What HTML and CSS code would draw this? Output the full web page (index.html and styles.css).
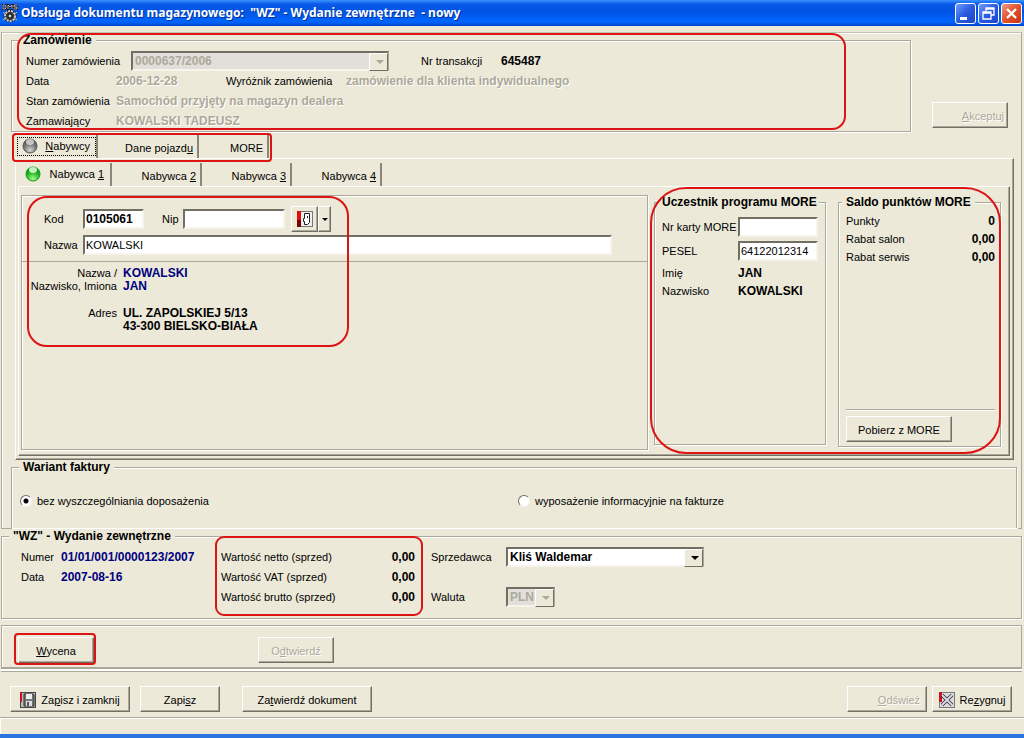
FILE: index.html
```html
<!DOCTYPE html>
<html lang="pl">

<head>
    <meta charset="UTF-8">
    <meta name="viewport" content="width=device-width, initial-scale=1.0">
    <title>Obsługa dokumentu magazynowego</title>
    <link rel="stylesheet" href="styles.css">
</head>

<body>
    <header class="titlebar">
        <svg class="app-icon" width="16" height="18" viewBox="0 0 16 18">
            <path d="M1 1v4h2l1-1V2L3 1zM6 6V1l2 2 2-2v5M15 1h-3v2h3v2h-3" fill="none" stroke="#112" stroke-width="2" />
            <path d="M1 1v4h2l1-1V2L3 1zM6 5V1l2 2 2-2v4M15 1h-3v2h3v2h-3" fill="none" stroke="#ddd" stroke-width="0.8" />
            <circle cx="8" cy="12" r="5" fill="#333" stroke="#222" stroke-width="3" />
            <circle cx="8" cy="12" r="5" fill="#333" stroke="#ccc" stroke-width="2" stroke-dasharray="2 1" />
            <circle cx="8" cy="12" r="2" fill="#ddd" stroke="#111" />
            <path d="M1 8l3 3M15 8l-3 3M1 16l3-2M15 16l-3-2" stroke="#bbb" />
        </svg>
        <h1>Obsługa dokumentu magazynowego: &nbsp;"WZ" - Wydanie zewnętrzne &nbsp;- nowy</h1>
        <button class="win-btn" aria-label="Minimalizuj">
            <svg width="19" height="19" viewBox="0 0 19 19"><rect x="4" y="13" width="7" height="3" fill="#fff" /></svg>
        </button>
        <button class="win-btn" aria-label="Przywróć">
            <svg width="19" height="19" viewBox="0 0 19 19"><path d="M7 7V4h8v7h-3M7 5h8M4 8h8v7H4zM4 9h8" fill="none" stroke="#fff" stroke-width="1.3" /></svg>
        </button>
        <button class="win-btn close" aria-label="Zamknij">
            <svg width="19" height="19" viewBox="0 0 19 19"><path d="M5 5l9 9M14 5l-9 9" stroke="#fff" stroke-width="2.4" /></svg>
        </button>
    </header>

    <main class="panel">
        <div class="order-row">
            <fieldset class="group order">
                <legend>Zamówienie</legend>
                <div class="line">
                    <label class="order-label" for="orderNo">Numer zamówienia</label>
                    <span class="combo combo-order disabled">
                        <select id="orderNo" disabled><option>0000637/2006</option></select>
                    </span>
                    <span class="trans-label">Nr transakcji</span>
                    <b>645487</b>
                </div>
                <div class="line">
                    <span class="order-key">Data</span>
                    <b class="grey date">2006-12-28</b>
                    <span class="mark-label">Wyróżnik zamówienia</span>
                    <b class="grey">zamówienie dla klienta indywidualnego</b>
                </div>
                <div class="line">
                    <span class="order-key">Stan zamówienia</span>
                    <b class="grey">Samochód przyjęty na magazyn dealera</b>
                </div>
                <div class="line">
                    <span class="order-key">Zamawiający</span>
                    <b class="grey">KOWALSKI TADEUSZ</b>
                </div>
                <span class="callout callout-order"></span>
            </fieldset>
            <button class="btn btn-accept" disabled><span><u>A</u>kceptuj</span></button>
        </div>

        <div class="tabs tabs-main" role="tablist">
            <button class="tab tab-buyers active" role="tab">
                <svg width="18" height="18" viewBox="0 0 18 18">
                    <defs>
                        <radialGradient id="greyBall" cx="50%" cy="80%" r="75%">
                            <stop offset="0" stop-color="#d5d5d5" />
                            <stop offset="0.6" stop-color="#777" />
                            <stop offset="1" stop-color="#555" />
                        </radialGradient>
                    </defs>
                    <circle cx="9" cy="9" r="7" fill="url(#greyBall)" stroke="#555" />
                    <ellipse cx="9" cy="5" rx="4" ry="3" fill="#ddd" opacity="0.8" />
                </svg>
                <span><u>N</u>abywcy</span>
            </button>
            <button class="tab tab-car" role="tab"><span>Dane pojazd<u>u</u></span></button>
            <button class="tab tab-more" role="tab"><span>MORE</span></button>
            <span class="callout callout-tabs"></span>
        </div>

        <div class="page outer">
            <div class="tabs tabs-inner" role="tablist">
                <button class="tab tab-first active" role="tab">
                    <svg width="18" height="18" viewBox="0 0 18 18">
                        <defs>
                            <radialGradient id="greenBall" cx="50%" cy="85%" r="80%">
                                <stop offset="0" stop-color="#a6ff8c" />
                                <stop offset="0.6" stop-color="#22b522" />
                                <stop offset="1" stop-color="#078a12" />
                            </radialGradient>
                        </defs>
                        <circle cx="9" cy="9" r="7" fill="url(#greenBall)" stroke="#159a1c" />
                        <ellipse cx="9" cy="5" rx="4" ry="3" fill="#dfffd8" opacity="0.85" />
                    </svg>
                    <span>Nabywca <u>1</u></span>
                </button>
                <button class="tab tab-next" role="tab"><span>Nabywca <u>2</u></span></button>
                <button class="tab tab-next" role="tab"><span>Nabywca <u>3</u></span></button>
                <button class="tab tab-next" role="tab"><span>Nabywca <u>4</u></span></button>
            </div>

            <div class="page inner">
                <section class="buyer">
                    <div class="buyer-form">
                        <div class="line">
                            <label class="buyer-label" for="code">Kod</label>
                            <input class="field bold code" id="code" type="text" value="0105061">
                            <label class="nip-label" for="nip">Nip</label>
                            <input class="field nip" id="nip" type="text">
                            <button class="btn tool" aria-label="Kartoteka">
                                <svg width="16" height="16" viewBox="0 0 16 16">
                                    <rect x="0.5" y="0.5" width="15" height="15" fill="#eee" stroke="#777" />
                                    <rect x="0" y="0" width="4" height="9" fill="#e01010" />
                                    <rect x="0" y="9" width="4" height="7" fill="#700" />
                                    <path d="M7.500 2.500h5v9l-2 2h-3v-3h-1v-3h1z" fill="#fff" stroke="#222" />
                                    <path d="M10.500 5v2" stroke="#222" />
                                </svg>
                            </button>
                            <button class="btn tool-arrow" aria-label="Więcej"></button>
                        </div>
                        <div class="line name-line">
                            <label class="buyer-label" for="name">Nazwa</label>
                            <input class="field name" id="name" type="text" value="KOWALSKI">
                        </div>
                    </div>
                    <dl class="details">
                        <dt>Nazwa /</dt>
                        <dd class="navy">KOWALSKI</dd>
                        <dt>Nazwisko, Imiona</dt>
                        <dd class="navy">JAN</dd>
                        <dt class="address">Adres</dt>
                        <dd class="address">UL. ZAPOLSKIEJ 5/13<br>43-300 BIELSKO-BIAŁA</dd>
                    </dl>
                    <span class="callout callout-buyer"></span>
                </section>

                <div class="more">
                    <fieldset class="group member">
                        <legend>Uczestnik programu MORE</legend>
                        <div class="member-grid">
                            <label for="card">Nr karty MORE</label>
                            <input class="field" id="card" type="text">
                            <label for="pesel">PESEL</label>
                            <input class="field" id="pesel" type="text" value="64122012314">
                        </div>
                        <div class="member-grid member-names">
                            <span>Imię</span><b>JAN</b>
                            <span>Nazwisko</span><b>KOWALSKI</b>
                        </div>
                    </fieldset>
                    <fieldset class="group balance">
                        <legend>Saldo punktów MORE</legend>
                        <div class="sum"><span>Punkty</span><b>0</b></div>
                        <div class="sum"><span>Rabat salon</span><b>0,00</b></div>
                        <div class="sum"><span>Rabat serwis</span><b>0,00</b></div>
                        <div class="fetch">
                            <button class="btn">Pobierz z MORE</button>
                        </div>
                    </fieldset>
                    <span class="callout callout-more"></span>
                </div>
            </div>
        </div>

        <fieldset class="group variant">
            <legend>Wariant faktury</legend>
            <div class="radios">
                <label><input type="radio" name="variant" checked>bez wyszczególniania doposażenia</label>
                <label><input type="radio" name="variant">wyposażenie informacyjnie na fakturze</label>
            </div>
        </fieldset>
    </main>

    <fieldset class="group document">
        <legend>"WZ" - Wydanie zewnętrzne</legend>
        <div class="doc-cols">
            <div class="doc-number">
                <span>Numer</span><b class="navy">01/01/001/0000123/2007</b>
                <span>Data</span><b class="navy">2007-08-16</b>
            </div>
            <div class="doc-values">
                <div class="sum"><span>Wartość netto (sprzed)</span><b>0,00</b></div>
                <div class="sum"><span>Wartość VAT (sprzed)</span><b>0,00</b></div>
                <div class="sum"><span>Wartość brutto (sprzed)</span><b>0,00</b></div>
                <span class="callout callout-values"></span>
            </div>
            <div class="doc-seller">
                <label for="seller">Sprzedawca</label>
                <span class="combo combo-seller">
                    <select id="seller"><option>Kliś Waldemar</option></select>
                </span>
                <label for="currency">Waluta</label>
                <span class="combo combo-currency disabled">
                    <select id="currency" disabled><option>PLN</option></select>
                </span>
            </div>
        </div>
    </fieldset>

    <section class="actions">
        <div class="price">
            <button class="btn"><span><u>W</u>ycena</span></button>
            <span class="callout callout-price"></span>
        </div>
        <button class="btn btn-unlock" disabled><span>O<u>d</u>twierdź</span></button>
    </section>

    <footer class="footer">
        <button class="btn w120">
            <svg width="16" height="16" viewBox="0 0 16 16">
                <rect x="0.5" y="0.5" width="15" height="15" fill="#bbb" stroke="#444" />
                <rect x="0" y="0" width="2" height="10" fill="#d01020" />
                <path d="M4 2h9l1 1v11H4z" fill="#777" stroke="#333" />
                <rect x="6" y="2" width="6" height="5" fill="#eee" />
                <rect x="6" y="9" width="6" height="5" fill="#ddd" />
                <rect x="7" y="10" width="2" height="4" fill="#555" />
            </svg>
            <span>Za<u>p</u>isz i zamknij</span>
        </button>
        <button class="btn w80"><span>Zapi<u>s</u>z</span></button>
        <button class="btn w130"><span>Za<u>t</u>wierdź dokument</span></button>
        <button class="btn w80 btn-refresh" disabled><span><u>O</u>dśwież</span></button>
        <button class="btn w80 btn-cancel">
            <svg width="16" height="16" viewBox="0 0 16 16">
                <rect x="0.5" y="0.5" width="15" height="15" fill="#ddd" stroke="#777" />
                <rect x="0" y="0" width="3" height="10" fill="#d01020" />
                <path d="M3 3l10 10M13 3L3 13" stroke="#333" stroke-width="3.6" />
                <path d="M3 3l10 10M13 3L3 13" stroke="#dde" stroke-width="1.8" />
            </svg>
            <span>Re<u>z</u>ygnuj</span>
        </button>
    </footer>
    <div class="statusbar"></div>
</body>

</html>
```
FILE: styles.css
```css
* {
    box-sizing: border-box;
}

body {
    margin: 0;
    min-height: 100vh;
    display: flex;
    flex-direction: column;
    background-color: #ece9d8;
    color: black;
    font-family: 'Liberation Sans', Arial, sans-serif;
    font-size: 11px;
    line-height: 14px;
}

button,
input,
select {
    font: inherit;
    color: inherit;
    margin: 0;
}

/* bold captions and values */
b,
dd,
.bold,
.group legend,
.combo select {
    font-size: 12px;
    font-weight: bold;
}

/* title bar */
.titlebar {
    display: flex;
    align-items: center;
    height: 26px;
    padding: 0 2px;
    gap: 2px;
    background: linear-gradient(#3a93ff 0, #0a5ae8 4px, #0054e3 12px, #0066ff 22px, #0044c8 26px);
}

.titlebar h1 {
    flex: 1;
    margin: 0 0 0 1px;
    color: white;
    font-family: 'Noto Sans', sans-serif;
    font-size: 12px;
    font-weight: bold;
    line-height: 20px;
    text-shadow: 1px 1px 0 #00309c;
    white-space: nowrap;
}

.win-btn {
    width: 21px;
    height: 21px;
    padding: 0;
    border: 1px solid white;
    border-radius: 3px;
    background: linear-gradient(135deg, #6f9cff, #2a5ae0 50%, #1c48c8);
}

.win-btn.close {
    background: linear-gradient(135deg, #f09a80, #e0512c 50%, #c8340e);
}

.win-btn svg {
    display: block;
}

/* shared pieces */
.group {
    position: relative;
    min-width: 0;
    margin: 0;
    padding: 0;
    border: 1px solid #aca899;
    box-shadow: 1px 1px 0 white, inset 1px 1px 0 white;
}

.group legend {
    margin-left: 7px;
    padding: 0 4px;
    background-color: #ece9d8;
}

.line {
    display: flex;
    align-items: center;
    height: 20px;
}

.sum {
    display: flex;
    justify-content: space-between;
    align-items: center;
}

.grey {
    color: #aca899;
    text-shadow: 1px 1px 0 white;
}

.navy {
    color: #000080;
}

.callout {
    position: absolute;
    border: 2px solid #dc1414;
    pointer-events: none;
    z-index: 2;
}

.btn {
    display: flex;
    align-items: center;
    justify-content: center;
    height: 26px;
    padding: 2px 0 0;
    border: 1px solid;
    border-color: white #716f64 #716f64 white;
    box-shadow: inset -1px -1px 0 #aca899;
    background-color: #ece9d8;
    white-space: nowrap;
}

.btn:disabled {
    color: #aca899;
    text-shadow: 1px 1px 0 white;
}

.field {
    height: 20px;
    padding: 0 1px;
    border: 2px solid;
    border-color: #716f64 #f6f4ec #f6f4ec #716f64;
    border-radius: 0;
    background-color: white;
    outline: none;
}

.combo {
    position: relative;
    display: block;
    height: 20px;
}

.combo select {
    appearance: none;
    width: 100%;
    height: 100%;
    padding: 0 2px;
    border: 2px solid;
    border-color: #716f64 #aca899 #f6f4ec #716f64;
    border-radius: 0;
    background-color: white;
}

.combo::before {
    content: "";
    position: absolute;
    top: 2px;
    right: 1px;
    width: 17px;
    height: 16px;
    border: 1px solid;
    border-color: white #716f64 #716f64 white;
    background-color: #ece9d8;
    pointer-events: none;
}

.combo::after {
    content: "";
    position: absolute;
    top: 9px;
    right: 5px;
    border: 4px solid transparent;
    border-top-color: black;
    border-bottom: 0;
    pointer-events: none;
}

.combo.disabled select {
    background-color: #e2dfdb;
    color: #aca899;
    opacity: 1;
}

.combo.disabled::after {
    border-top-color: #aca899;
}

/* main panel */
.panel {
    margin: 6px 2px 0 1px;
    border: 1px solid #aca899;
    border-top-color: #c4c0b0;
    box-shadow: inset 1px 1px 0 white;
}

.order-row {
    display: flex;
    align-items: flex-end;
    gap: 21px;
    padding: 0 13px 0 9px;
}

.order {
    flex: 1;
    padding: 4px 0 0 14px;
}

.order legend {
    margin-left: -7px;
}

.order-label {
    width: 105px;
}

.order-key {
    width: 90px;
    white-space: nowrap;
}

.combo-order {
    width: 258px;
    margin-right: 32px;
}

.trans-label {
    width: 80px;
}

.date {
    width: 110px;
}

.mark-label {
    width: 120px;
}

.callout-order {
    top: -14px;
    left: 5px;
    right: 64px;
    bottom: 1px;
    border-radius: 14px;
}

.btn-accept {
    width: 76px;
    margin-bottom: 4px;
    padding-right: 3px;
    justify-content: flex-end;
}

/* tabs */
.tabs {
    position: relative;
    display: flex;
}

.tabs-main {
    height: 26px;
    padding: 3px 0 0 13px;
}

.tabs-inner {
    height: 27px;
    padding-top: 4px;
}

.tab {
    display: flex;
    align-items: center;
    justify-content: flex-end;
    gap: 6px;
    padding: 2px 4px 0 0;
    border: 0;
    border-right: 2px solid #8a877a;
    background: none;
    white-space: nowrap;
}

.tab.active {
    padding: 0 6px 2px 6px;
    justify-content: space-between;
}

.tab-buyers {
    width: 83px;
}

.tab-buyers.active {
    outline: 1px dotted black;
    outline-offset: -3px;
}

.tab-car {
    width: 101px;
}

.tab-more {
    width: 70px;
}

.tab-first {
    width: 94px;
}

.tab-next {
    width: 90px;
}

.callout-tabs {
    top: 1px;
    left: 10px;
    width: 260px;
    height: 29px;
    border-radius: 4px;
}

.page {
    border: 1px solid;
    border-color: white #716f64 #716f64 white;
    box-shadow: inset -1px -1px 0 #aca899;
}

.outer {
    margin: 0 7px 0 13px;
    padding: 0 3px 3px 2px;
}

.inner {
    display: flex;
    gap: 2px;
    min-height: 269px;
    padding: 8px 8px 5px 2px;
}

/* buyer */
.buyer {
    position: relative;
    flex: 1;
    border: 1px solid #aca899;
    box-shadow: inset 1px 1px 0 white, 1px 1px 0 white;
}

.buyer-form {
    padding: 13px 35px 6px 22px;
    border-bottom: 1px solid #aca899;
}

.buyer-label {
    flex: none;
    width: 39px;
}

.code {
    width: 61px;
    margin-right: 18px;
}

.nip-label {
    width: 21px;
}

.nip {
    width: 102px;
    margin-right: 6px;
}

.tool {
    width: 27px;
    padding: 0;
}

.tool-arrow {
    width: 13px;
    padding: 0;
}

.tool-arrow::after {
    content: "";
    border: 3px solid transparent;
    border-top-color: black;
    border-bottom: 0;
}

.name-line {
    margin-top: 6px;
}

.name {
    flex: 1;
    min-width: 0;
}

.details {
    display: grid;
    grid-template-columns: 95px 1fr;
    column-gap: 6px;
    margin: 5px 0 0;
    line-height: 13px;
}

.details dt {
    text-align: right;
}

.details dd {
    margin: 0;
}

.details .address {
    margin-top: 14px;
}

.callout-buyer {
    top: 0;
    left: 5px;
    width: 322px;
    height: 151px;
    border-radius: 20px;
}

/* MORE programme */
.more {
    position: relative;
    display: flex;
    gap: 12px;
    padding-left: 4px;
}

.member {
    width: 172px;
    margin-bottom: 5px;
    padding-left: 7px;
}

.member legend,
.balance legend {
    margin-left: -4px;
}

.member legend {
    padding: 0 2px 0 4px;
}

.member-grid {
    display: grid;
    grid-template-columns: 76px 80px;
    row-gap: 4px;
    align-items: center;
    padding-top: 8px;
    white-space: nowrap;
}

.member-names {
    grid-auto-rows: 14px;
    padding-top: 5px;
}

.balance {
    display: flex;
    flex-direction: column;
    width: 163px;
    margin-bottom: 3px;
    padding: 3px 5px 4px 7px;
}

.balance .sum {
    height: 18px;
}

.fetch {
    margin-top: 143px;
    padding-top: 6px;
    border-top: 1px solid #aca899;
    box-shadow: inset 0 1px 0 white;
}

.fetch .btn {
    width: 106px;
}

.callout-more {
    top: -8px;
    left: 0;
    right: 0;
    bottom: -4px;
    border-radius: 36px;
}

/* invoice variant */
.variant {
    margin: 0 4px 0 9px;
    border-bottom: 0;
}

.radios {
    display: grid;
    grid-template-columns: 1fr 1fr;
    padding: 20px 0 20px 8px;
}

.radios label {
    display: flex;
    align-items: center;
    gap: 5px;
}

.radios input {
    appearance: none;
    width: 12px;
    height: 12px;
    border: 1px solid;
    border-color: #716f64 #f6f4ec #f6f4ec #716f64;
    border-radius: 50%;
    background-color: white;
}

.radios input:checked {
    background-image: radial-gradient(circle, black 2px, white 3px);
}

/* document */
.document {
    margin: 0 2px 0 1px;
    padding: 4px 0 11px 19px;
}

.document legend {
    margin-left: -12px;
}

.doc-cols {
    display: flex;
}

.doc-number {
    display: grid;
    grid-template-columns: 40px 160px;
    grid-auto-rows: 20px;
    align-items: center;
    align-content: start;
}

.doc-values {
    position: relative;
    width: 194px;
}

.doc-values .sum {
    height: 20px;
}

.callout-values {
    top: -11px;
    left: -6px;
    right: -8px;
    bottom: -9px;
    border-radius: 9px;
}

.doc-seller {
    display: grid;
    grid-template-columns: 75px 198px;
    grid-auto-rows: 20px;
    row-gap: 20px;
    align-items: center;
    margin-left: 16px;
}

.combo-currency {
    width: 49px;
}

/* pricing and footer buttons */
.actions {
    display: flex;
    gap: 164px;
    margin: 6px 2px 0 1px;
    padding: 11px 0 4px 16px;
    border: 1px solid #aca899;
    border-bottom: 2px solid #aca899;
    box-shadow: inset 1px 1px 0 white, 0 2px 0 white, 0 3px 0 #aca899;
}

.price {
    position: relative;
}

.price .btn,
.btn-unlock {
    width: 76px;
}

.callout-price {
    top: -4px;
    left: -4px;
    right: -2px;
    bottom: -2px;
    border-radius: 4px;
}

.footer {
    display: flex;
    gap: 10px;
    padding: 17px 12px 5px 10px;
}

.footer .btn {
    gap: 5px;
}

.w80 {
    width: 80px;
}

.w120 {
    width: 120px;
}

.w130 {
    width: 130px;
    margin-left: 12px;
}

.btn.btn-refresh {
    margin-left: auto;
    margin-right: -5px;
    padding-right: 6px;
    justify-content: flex-end;
}

.statusbar {
    flex: 1;
    min-height: 20px;
    border-top: 1px solid #aca899;
    border-bottom: 4px solid #2a74e0;
    box-shadow: inset 1px 1px 0 white;
}
```
